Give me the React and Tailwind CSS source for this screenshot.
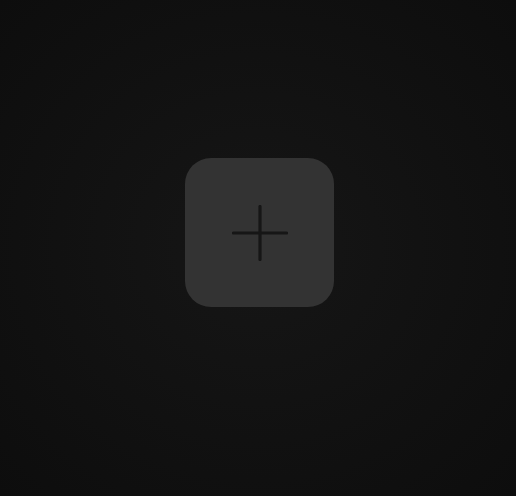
import React from 'react';

function App() {
  return (
    <div className="w-full h-[496px] flex justify-center pt-[158px] bg-[#131313] bg-radial from-[#161616] to-[#0d0d0d]">
      {/* Add button */}
      <button className="w-[149px] h-[149px] ml-[3px] rounded-[26px] bg-[#333333] flex items-center justify-center">
        <svg width="56" height="56" viewBox="0 0 56 56" fill="none">
          <path d="M28 1.5V54.5M1.5 28H54.5" stroke="#161616" strokeWidth="3.2" strokeLinecap="round" />
        </svg>
      </button>
    </div>
  );
}

export default App;
